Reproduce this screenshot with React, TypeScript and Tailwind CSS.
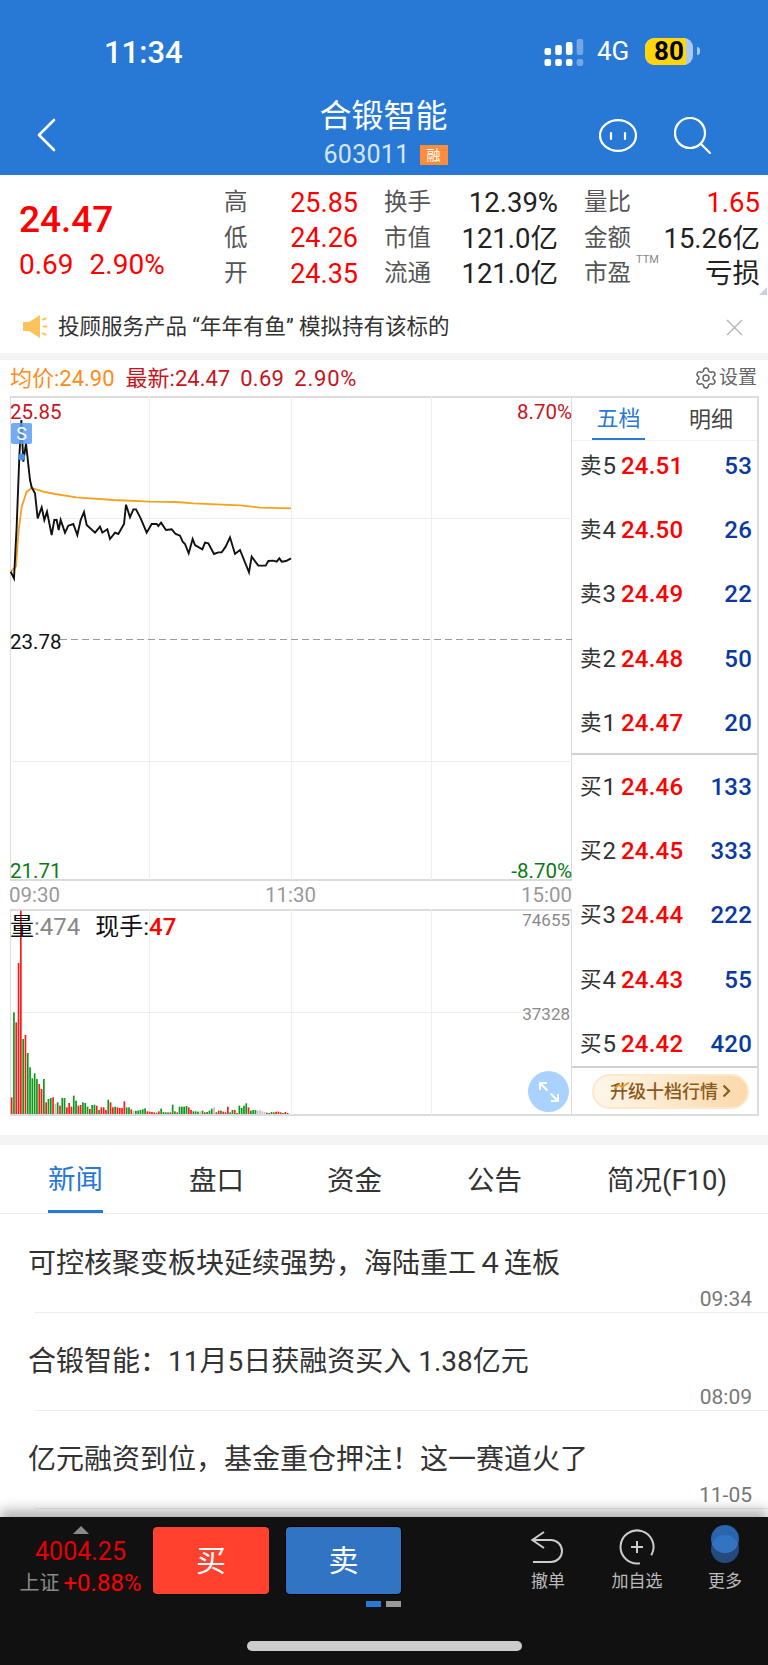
import { Settings } from "lucide-react";

const sans = "font-['Roboto','Noto_Sans_CJK_SC',sans-serif]";

const pricePoints: number[][] = [
  [32,635],[42,655],[50,500],[58,290],[64,180],[70,305],[78,250],[90,360],[95,382],[105,400],[113,475],[125,442],[133,480],[141,455],[155,525],[163,480],[170,480],[176,510],[182,480],[195,518],[205,497],[220,492],[232,525],[242,480],[252,456],[260,495],[285,518],[300,500],[307,518],[322,508],[330,537],[345,518],[355,522],[372,492],[378,434],[390,472],[400,448],[408,448],[422,475],[440,518],[455,492],[470,492],[475,498],[483,488],[498,510],[515,508],[527,522],[540,527],[548,545],[555,552],[566,580],[578,537],[585,555],[607,568],[615,548],[625,550],[642,582],[655,577],[665,577],[677,560],[690,532],[705,582],[720,570],[747,637],[755,590],[775,617],[797,617],[805,603],[820,602],[830,605],[838,595],[845,605],[858,603],[873,595],
];
const avgPoints: number[][] = [
  [32,635],[48,620],[55,520],[65,440],[80,395],[95,384],[130,395],[165,402],[230,412],[340,420],[450,425],[530,426],[580,430],[720,436],[780,443],[873,445],
];

// height + colour of each minute bar, read off the picture at 3x
const volumes = "r50 g305 r275 r453 r610 g225 r237 g183 g140 g107 g122 g105 r90 r75 g105 r35 g45 g48 r50 n30 g35 r25 g48 g48 r20 r33 r22 g55 g40 r25 r27 g35 g33 g22 r15 g27 g28 r25 g12 r20 r20 r12 g43 r35 r20 g22 r20 r18 r18 r38 g20 g20 r14 n10 g10 g10 g12 g14 g17 r8 r7 r6 r5 g4 r8 g16 g6 g5 g5 r5 g28 g8 r5 g22 g22 g22 g24 r20 r12 g8 g8 g7 n8 g10 r5 g6 g10 g16 n20 r5 r10 g10 r7 r5 r22 g5 g12 r12 r3 g25 g18 g25 g32 r20 g10 g12 g12 n10 n12 n8 n6 r4 g3 g6 g5 r7 r7 r5 g3 r6 r3".split(" ");
const volColor: Record<string, string> = { r: "#ff1a1a", g: "#0a9a1a", n: "#c4c4c4" };

const stats = [
  ["高", "25.85", "换手", "12.39%", "量比", "1.65"],
  ["低", "24.26", "市值", "121.0亿", "金额", "15.26亿"],
  ["开", "24.35", "流通", "121.0亿", "市盈", "亏损"],
];

const asks = [["卖", "5", "24.51", "53"], ["卖", "4", "24.50", "26"], ["卖", "3", "24.49", "22"], ["卖", "2", "24.48", "50"], ["卖", "1", "24.47", "20"]];
const bids = [["买", "1", "24.46", "133"], ["买", "2", "24.45", "333"], ["买", "3", "24.44", "222"], ["买", "4", "24.43", "55"], ["买", "5", "24.42", "420"]];

const news = [
  ["可控核聚变板块延续强势，海陆重工４连板", "09:34"],
  ["合锻智能：11月5日获融资买入 1.38亿元", "08:09"],
  ["亿元融资到位，基金重仓押注！这一赛道火了", "11-05"],
];

const toLine = (pts: number[][]) => pts.map(([x, y]) => `${x / 3},${y / 3}`).join(" ");

function SignalIcon() {
  const tops = [12, 9, 6, 3];
  return (
    <svg width="40" height="30" viewBox="0 0 40 30">
      {tops.map((t, c) => (
        <g key={c} fill="#fff" opacity={c === 3 ? 0.35 : 1}>
          <rect x={0.5 + c * 10.7} y={t} width="6.6" height={19 - t} rx="2" />
          <rect x={0.5 + c * 10.7} y="23" width="6.6" height="7" rx="2" />
        </g>
      ))}
    </svg>
  );
}

function Row({ row }: { row: string[] }) {
  return (
    <div className="flex h-[64.2px] items-center pl-[8px] pr-[5px]">
      <span className="flex w-[41px] items-center text-[#333]">
        <span className="text-[21.5px]">{row[0]}</span>
        <span className="ml-[1px] text-[24px]">{row[1]}</span>
      </span>
      <span className="text-[24px] font-medium tracking-[0.2px] text-[#ff0000]">{row[2]}</span>
      <span className="ml-auto text-[24px] font-medium tracking-[0.2px] text-[#0a3aa0]">{row[3]}</span>
    </div>
  );
}

export default function App() {
  return (
    <div className={`relative flex h-[1665px] w-[768px] flex-col overflow-hidden bg-white ${sans}`}>
      {/* blue header */}
      <div className="h-[175px] shrink-0 bg-[#2878d6] text-white">
        <div className="flex h-[88px] items-start">
          <span className="ml-[104px] mt-[34px] text-[31px] font-medium leading-[38px]">11:34</span>
          <div className="ml-auto mr-[68px] mt-[36px] flex items-center">
            <SignalIcon />
            <span className="ml-[13px] w-[35px] text-[26px] leading-[30px]">4G</span>
            <div className="relative ml-[13px] flex h-[27px] w-[48px] items-center overflow-hidden rounded-[9px] bg-[#a9c9f0] pl-[9px]">
              <div className="absolute inset-y-0 left-0 w-[41px] rounded-l-[9px] bg-[#ffd60a]" />
              <span className="relative text-[26px] font-bold leading-none text-black">80</span>
            </div>
            <div className="ml-[4px] h-[8px] w-[3px] rounded-r-full bg-[#a9c9f0]" />
          </div>
        </div>
        <div className="flex h-[87px] items-start">
          <svg className="ml-[36px] mt-[30px] shrink-0" width="20" height="34" viewBox="0 0 20 34" fill="none" stroke="#fff" strokeWidth="2.6" strokeLinecap="round" strokeLinejoin="round">
            <path d="M18 2L3 17l15 15" />
          </svg>
          <div className="ml-[265px] flex w-[125px] shrink-0 flex-col items-center">
            <span className="mt-[8px] whitespace-nowrap text-[32px] leading-[40px]">合锻智能</span>
            <div className="ml-[4px] mt-[5px] flex items-center whitespace-nowrap">
              <span className="text-[25px] leading-[28px] tracking-[0.3px] text-[#d7e6fa]">603011</span>
              <span className="ml-[10px] flex h-[20px] w-[28px] items-center justify-center bg-[#ff8c3a] text-[14px] leading-none">融</span>
            </div>
          </div>
          <svg className="ml-[153px] mt-[31px] shrink-0" width="38" height="33" viewBox="0 0 38 33" fill="none" stroke="#fff" strokeWidth="2.2" strokeLinecap="round">
            <ellipse cx="19" cy="16.5" rx="18" ry="15.4" />
            <path d="M12 14v6M26 14v6" />
          </svg>
          <svg className="ml-[37px] mt-[29px] shrink-0" width="38" height="37" viewBox="0 0 38 37" fill="none" stroke="#fff" strokeWidth="2.2" strokeLinecap="round">
            <circle cx="16" cy="16" r="15" />
            <path d="M27 27l9 9" />
          </svg>
        </div>
      </div>

      {/* quote summary */}
      <div className="relative flex h-[116px] shrink-0">
        <div className="w-[224px] shrink-0 pl-[19px] text-[#ff0000]">
          <div className="mt-[20px] text-[37px] font-medium leading-[50px]">24.47</div>
          <div className="mt-[5px] flex text-[28px] leading-[30px]">
            <span>0.69</span>
            <span className="ml-[16px]">2.90%</span>
          </div>
        </div>
        <div className="mt-[10px] flex-1">
          {stats.map((r) => (
            <div key={r[0]} className="flex h-[35.5px] items-center whitespace-nowrap">
              <div className="flex w-[134px] items-center justify-between">
                <span className="text-[23.5px] text-[#555]">{r[0]}</span>
                <span className="text-[27px] text-[#ff0000]">{r[1]}</span>
              </div>
              <span className="ml-[26px] w-[47px] text-[23.5px] text-[#555]">{r[2]}</span>
              <span className="w-[127px] text-right text-[27.5px] text-[#222]">{r[3]}</span>
              <span className="relative ml-[26px] w-[47px] text-[23.5px] text-[#555]">
                {r[4]}
                {r[4] === "市盈" && <span className="absolute left-[52px] top-[-3px] text-[11px] leading-[14px] text-[#888]">TTM</span>}
              </span>
              <span className={`w-[129px] text-right text-[27.5px] ${r[4] === "量比" ? "text-[#ff0000]" : "text-[#222]"}`}>{r[5]}</span>
            </div>
          ))}
        </div>
        <div className="absolute right-[1px] top-[112px] h-0 w-0 border-b-[8px] border-l-[8px] border-b-[#c9d3de] border-l-transparent" />
      </div>

      {/* notice */}
      <div className="flex h-[62px] shrink-0 items-center pl-[23px] pt-[10px]">
        <svg width="26" height="24" viewBox="0 0 26 24">
          <path d="M0 7h6L17 0v23L6 16H0z" fill="#fdc35b" />
          <path d="M20 4.5l2.5-1M20.5 11.5h3M20 18.5l2.5 1" stroke="#fdc35b" strokeWidth="2" strokeLinecap="round" />
        </svg>
        <span className="ml-[9px] text-[21.5px] text-[#333]">投顾服务产品 “年年有鱼” 模拟持有该标的</span>
        <svg className="ml-auto mr-[25px]" width="17" height="17" viewBox="0 0 17 17" stroke="#b5b5b5" strokeWidth="1.4">
          <path d="M1 1l15 15M16 1L1 16" />
        </svg>
      </div>
      <div className="h-[7px] shrink-0 bg-[#f4f4f4]" />

      {/* chart header */}
      <div className="flex h-[36px] shrink-0 items-center whitespace-nowrap pl-[10px] pr-[11px] text-[22px]">
        <span className="text-[#ff8c1a]">均价:24.90</span>
        <span className="ml-[11px] text-[#c8141c]">最新:24.47</span>
        <span className="ml-[10px] tracking-[0.3px] text-[#c8141c]">0.69</span>
        <span className="ml-[10px] tracking-[0.8px] text-[#c8141c]">2.90%</span>
        <Settings className="ml-auto" size={24} strokeWidth={1.5} color="#666" />
        <span className="ml-[1px] text-[19px] text-[#666]">设置</span>
      </div>

      {/* chart and order book */}
      <div className="flex h-[720px] shrink-0 pl-[10px] pr-[9px]">
        <div className="flex w-[562px] shrink-0 flex-col">
          <div className="relative h-[485px] border-x border-y-2 border-[#dcdcdc]">
            <svg className="absolute left-[-1px] top-[-2px]" width="562" height="485" viewBox="10 396 562 485" fill="none">
              <path d="M149.5 396v484M291.5 396v484M431.5 396v484M10 518.5h562M10 761.5h562" stroke="#eeeeee" />
              <path d="M60 639.5h512" stroke="#9a9a9a" strokeDasharray="7 4" />
              <g transform="translate(0 360)">
                <polyline points={toLine(avgPoints)} stroke="#f9a01e" strokeWidth="1.8" />
                <polyline points={toLine(pricePoints)} stroke="#111" strokeWidth="1.9" />
              </g>
              <circle cx="21.5" cy="457" r="3.5" fill="#4a90e8" />
            </svg>
            <span className="absolute left-[-1px] top-[2px] text-[20.5px] leading-[24px] text-[#c8141c]">25.85</span>
            <span className="absolute right-[-1px] top-[2px] text-[20.5px] leading-[24px] text-[#c8141c]">8.70%</span>
            <span className="absolute left-0 top-[25px] flex h-[21px] w-[21px] items-center justify-center rounded-[2px] bg-[#5b9df0]/85 text-[18px] text-white">S</span>
            <span className="absolute left-[-1px] top-[232px] text-[20.5px] leading-[24px] text-[#111]">23.78</span>
            <span className="absolute bottom-[-4px] left-[-1px] text-[20.5px] leading-[24px] text-[#0a7a14]">21.71</span>
            <span className="absolute bottom-[-4px] right-[-1px] text-[20.5px] leading-[24px] text-[#0a7a14]">-8.70%</span>
          </div>
          <div className="flex h-[28px] shrink-0 items-center justify-between pt-[1px] text-[20.5px] text-[#999]">
            <span className="ml-[-1px]">09:30</span>
            <span>11:30</span>
            <span>15:00</span>
          </div>
          <div className="relative h-[207px] border-x border-y-2 border-[#dcdcdc]">
            <svg className="absolute left-[-1px] top-[-2px]" width="562" height="207" viewBox="10 909 562 207" fill="none">
              <path d="M149.5 909v206M291.5 909v206M431.5 909v206M10 1012.5h562" stroke="#eeeeee" />
              {volumes.map((v, i) => {
                const h = Number(v.slice(1)) / 3;
                return <rect key={i} x={10.8 + i * 2.3} y={1114 - h} width="1.7" height={h} fill={volColor[v[0]]} />;
              })}
            </svg>
            <div className="absolute left-[-1px] top-[1px] flex text-[24px] leading-[30px]">
              <span className="text-[#111]">量</span><span className="text-[#888]">:474</span>
              <span className="ml-[15px] text-[#111]">现手:</span><span className="font-medium text-[#ff0000]">47</span>
            </div>
            <span className="absolute right-[1px] top-[-3px] text-[17px] leading-[24px] text-[#8a8a8a]">74655</span>
            <span className="absolute right-[1px] top-[91px] text-[17px] leading-[24px] text-[#8a8a8a]">37328</span>
            <div className="absolute bottom-[2px] right-[2px] flex h-[41px] w-[41px] items-center justify-center rounded-full bg-[#a9d2ff]">
              <svg width="24" height="24" viewBox="0 0 24 24" fill="none" stroke="#fff" strokeWidth="2">
                <path d="M3 10V3h7M3 3l7.5 7.5M14 21h7v-7M21 21l-7.5-7.5" />
              </svg>
            </div>
          </div>
        </div>

        <div className="flex w-[187px] shrink-0 flex-col border-y-2 border-r-2 border-[#dcdcdc]">
          <div className="flex h-[43px] shrink-0 border-b border-[#f2f2f2] text-[22px]">
            <div className="ml-[20px] flex w-[53px] items-center justify-center whitespace-nowrap border-b-2 border-[#2878d6] text-[#2878d6]">五档</div>
            <div className="ml-[43px] flex w-[46px] items-center justify-center whitespace-nowrap text-[#444]">明细</div>
          </div>
          <div className="h-[314px] shrink-0 border-b-2 border-[#d0d0d0]">
            <div className="-mt-[7px]">
              {asks.map((r) => <Row key={r[1]} row={r} />)}
            </div>
          </div>
          <div className="h-[313px] shrink-0 border-b-2 border-[#d0d0d0]">
            {bids.map((r) => <Row key={r[1]} row={r} />)}
          </div>
          <div className="flex flex-1 items-center justify-end pr-[8px]">
            <div className="relative flex h-[35px] w-[157px] items-center justify-center whitespace-nowrap rounded-full border-2 border-[#fde8cc] bg-gradient-to-r from-[#fff6ea] to-[#fbd9ab] text-[18px] font-medium text-[#8a5a1c]">
              <svg className="absolute left-[20px] top-[6px]" width="16" height="8" viewBox="0 0 16 8" fill="none" stroke="#f59a23" strokeWidth="1.6">
                <path d="M0 7l5-4 3 2 7-4.5" />
              </svg>
              升级十档行情
              <svg className="ml-[4px]" width="9" height="14" viewBox="0 0 9 14" fill="none" stroke="#8a5a1c" strokeWidth="2.2">
                <path d="M1.5 1.5L7 7l-5.5 5.5" />
              </svg>
            </div>
          </div>
        </div>
      </div>

      <div className="h-[19px] shrink-0" />
      <div className="h-[10px] shrink-0 bg-[#f4f4f4]" />

      {/* tabs */}
      <div className="flex h-[69px] shrink-0 items-center whitespace-nowrap border-b border-[#ececec] text-[27.5px] text-[#333]">
        <div className="ml-[48px] flex h-full w-[55px] items-center justify-center border-b-[3px] border-[#2878d6] pt-[5px] text-[#2878d6]">新闻</div>
        <span className="ml-[86px] mt-[3px]">盘口</span>
        <span className="ml-[83px] mt-[3px]">资金</span>
        <span className="ml-[85px] mt-[3px]">公告</span>
        <span className="ml-[85px] mt-[3px]">简况(F10)</span>
      </div>

      {/* news */}
      <div className="flex-1 overflow-hidden">
        {news.map(([title, time]) => (
          <div key={time} className="flex h-[98px] flex-col">
            <div className="whitespace-nowrap pl-[28px] pt-[30px] text-[28px] leading-[40px] text-[#333]">{title}</div>
            <div className="mt-[3px] pr-[16px] text-right text-[21px] leading-[25px] text-[#777]">{time}</div>
            <div className="ml-[35px] mt-auto border-b border-[#ececec]" />
          </div>
        ))}
      </div>

      {/* bottom trade bar */}
      <div className="relative h-[148px] shrink-0 bg-[#111111] shadow-[0_-7px_12px_rgba(0,0,0,0.3)]">
        <div className="flex h-full items-start">
          <div className="flex w-[153px] shrink-0 flex-col items-center whitespace-nowrap pl-[8px]">
            <div className="mt-[9px] h-0 w-0 border-x-[8px] border-b-[8px] border-x-transparent border-b-[#8a8a8a]" />
            <span className="mt-[1px] text-[25px] leading-[34px] text-[#e60000]">4004.25</span>
            <div className="flex items-center leading-[28px]">
              <span className="text-[20px] text-[#8a8a8a]">上证</span>
              <span className="ml-[4px] text-[24px] text-[#f00]">+0.88%</span>
            </div>
          </div>
          <div className="mt-[10px] flex h-[67px] w-[116px] shrink-0 items-center justify-center rounded-[4px] bg-[#ff412e] text-[30px] text-white shadow-[0_0_0_1px_#000]">买</div>
          <div className="ml-[17px] mt-[10px] flex h-[67px] w-[115px] shrink-0 items-center justify-center rounded-[4px] bg-[#3174c4] text-[30px] text-white shadow-[0_0_0_1px_#000]">卖</div>
          <div className="ml-[117px] mt-[13px] flex w-[60px] shrink-0 flex-col items-center text-[#bbb]">
            <svg width="36" height="36" viewBox="0 0 36 36" fill="none" stroke="#ccc" strokeWidth="2">
              <path d="M14 2L2.3 10 14 18M2.3 10H21a11 11 0 0 1 0 22H3" />
            </svg>
            <span className="mt-[3px] text-[17px] leading-[24px]">撤单</span>
          </div>
          <div className="ml-[29px] mt-[12px] flex w-[60px] shrink-0 flex-col items-center whitespace-nowrap text-[#bbb]">
            <svg width="36" height="36" viewBox="0 0 36 36" fill="none" stroke="#ccc" strokeWidth="2">
              <path d="M20.9 34.2A16.5 16.5 0 1 1 32.3 26.25" />
              <path d="M18 12v12M12 18h12" />
            </svg>
            <span className="mt-[4px] text-[17px] leading-[24px]">加自选</span>
          </div>
          <div className="ml-[28px] mt-[8px] flex w-[60px] shrink-0 flex-col items-center text-[#bbb]">
            <div className="relative h-[38px] w-[28px]">
              <div className="absolute bottom-0 h-[28px] w-[28px] rounded-full bg-[#254b7c]" />
              <div className="absolute top-0 h-[28px] w-[28px] overflow-hidden rounded-full bg-[#2a65ad]">
                <div className="ml-0 mt-[10px] h-[28px] w-[28px] rounded-full bg-[#3074c2]" />
              </div>
            </div>
            <span className="mt-[6px] text-[17px] leading-[24px]">更多</span>
          </div>
        </div>
        <div className="absolute left-[366px] top-[84px] flex gap-[5px]">
          <div className="h-[6px] w-[15px] bg-[#2878d6]" />
          <div className="h-[6px] w-[15px] bg-[#999]" />
        </div>
        <div className="absolute left-[247px] top-[124px] h-[10px] w-[275px] rounded-full bg-[#cccccc]" />
      </div>
    </div>
  );
}
